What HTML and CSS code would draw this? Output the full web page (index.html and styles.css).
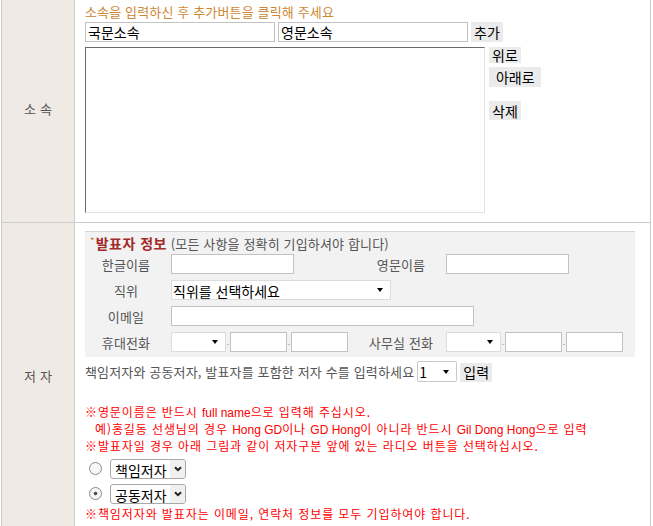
FILE: index.html
```html
<!DOCTYPE html>
<html lang="ko">
<head>
  <meta charset="UTF-8">
  <title>저자 정보 입력</title>
  <meta name="viewport" content="width=device-width, initial-scale=1.0"/>
  <link rel="stylesheet" href="styles.css">
</head>
<body>
  <div class="form">
    <div class="row row-org">
      <div class="head">소 속</div>
      <div class="cell">
        <p class="hint">소속을 입력하신 후 추가버튼을 클릭해 주세요</p>
        <div class="add-line">
          <input type="text" class="txt txt-org" value="국문소속">
          <input type="text" class="txt txt-org" value="영문소속">
          <button class="btn">추가</button>
        </div>
        <div class="list-line">
          <div class="org-list"></div>
          <div class="side">
            <button class="btn btn-up">위로</button>
            <button class="btn btn-down">&nbsp;아래로&nbsp;</button>
            <button class="btn btn-del">삭제</button>
          </div>
        </div>
      </div>
    </div>

    <div class="row row-author">
      <div class="head">저 자</div>
      <div class="cell">
        <div class="info-box">
          <div class="info-title"><span class="star">*</span><b>발표자 정보</b> (모든 사항을 정확히 기입하셔야 합니다)</div>
          <div class="info-grid">
            <label>한글이름</label>
            <input type="text" class="txt w-name">
            <label>영문이름</label>
            <input type="text" class="txt w-name">

            <label>직위</label>
            <span class="sel sel-pos wide"><select><option>직위를 선택하세요</option></select><i class="arrow"></i></span>

            <label>이메일</label>
            <input type="text" class="txt w-mail wide">

            <label>휴대전화</label>
            <span class="phone">
              <span class="sel sel-tel"><select><option></option></select><i class="arrow"></i></span>
              <span class="dash">-</span>
              <input type="text" class="txt w-tel">
              <span class="dash">-</span>
              <input type="text" class="txt w-tel">
            </span>
            <label>사무실 전화</label>
            <span class="phone">
              <span class="sel sel-tel"><select><option></option></select><i class="arrow"></i></span>
              <span class="dash">-</span>
              <input type="text" class="txt w-tel">
              <span class="dash">-</span>
              <input type="text" class="txt w-tel">
            </span>
          </div>
        </div>

        <div class="count-line">
          책임저자와 공동저자, 발표자를 포함한 저자 수를 입력하세요
          <span class="sel sel-count"><select><option>1</option></select><i class="arrow"></i></span>
          <button class="btn">입력</button>
        </div>

        <div class="notes">
          <p>※영문이름은 반드시 <span class="en">full name</span>으로 입력해 주십시오.</p>
          <p class="indent">예)홍길동 선생님의 경우 <span class="en">Hong GD</span>이나 <span class="en">GD Hong</span>이 아니라 반드시 <span class="en">Gil Dong Hong</span>으로 입력</p>
          <p>※발표자일 경우 아래 그림과 같이 저자구분 앞에 있는 라디오 버튼을 선택하십시오.</p>
        </div>

        <div class="authors">
          <div class="author-line">
            <input type="radio" name="presenter" class="radio">
            <span class="old-sel"><select><option>책임저자</option></select><span class="chev"><svg width="8" height="6" viewBox="0 0 8 6"><path d="M1 1.2 L4 4.2 L7 1.2" fill="none" stroke="#222" stroke-width="2"/></svg></span></span>
          </div>
          <div class="author-line">
            <input type="radio" name="presenter" class="radio" checked>
            <span class="old-sel"><select><option>공동저자</option></select><span class="chev"><svg width="8" height="6" viewBox="0 0 8 6"><path d="M1 1.2 L4 4.2 L7 1.2" fill="none" stroke="#222" stroke-width="2"/></svg></span></span>
          </div>
        </div>

        <div class="notes">
          <p>※책임저자와 발표자는 이메일, 연락처 정보를 모두 기입하여야 합니다.</p>
        </div>
      </div>
    </div>
  </div>
</body>
</html>
```

FILE: styles.css
```css
body {
  margin: 0;
  font-family: "Noto Sans CJK KR", sans-serif;
  font-size: 13px;
  letter-spacing: 0.15px;
  color: #555;
  background: #fff;
}
p {
  margin: 0;
}
.form {
  width: 650px;
  margin: -6px 0 0 1px;
  border-left: 1px solid #ccc;
  border-right: 1px solid #ccc;
  box-sizing: border-box;
}
.row {
  display: grid;
  grid-template-columns: 73px 1fr;
}
.row + .row {
  border-top: 1px solid #ccc;
}
.head {
  background: #efebe4;
  border-right: 1px solid #ccc;
  display: flex;
  align-items: center;
  justify-content: center;
  color: #555;
}
.cell {
  padding: 11px 0 9px 10px;
}
.row-author .cell {
  padding: 8px 0 6px 10px;
}

/* 소속 */
.hint {
  color: #cc8833;
  line-height: 14px;
}
.add-line {
  display: flex;
  gap: 3px;
  margin-top: 3px;
}
.txt {
  height: 20px;
  box-sizing: border-box;
  border: 1px solid #c2c2c2;
  background: #fff;
  padding: 0 2px;
  font: 14px "Noto Sans CJK KR", sans-serif;
  letter-spacing: 0;
  color: #000;
  outline: none;
}
.txt-org {
  width: 190px;
}
.btn {
  height: 20px;
  padding: 0 3px;
  border: 0;
  background: #ebebeb;
  font: 14px "Noto Sans CJK KR", sans-serif;
  letter-spacing: 0;
  line-height: 20px;
  color: #000;
}
.list-line {
  display: flex;
  margin-top: 5px;
}
.org-list {
  width: 400px;
  height: 166px;
  box-sizing: border-box;
  border: 1px solid;
  border-color: #6b6b6b #e2e2e2 #e2e2e2 #6b6b6b;
  background: #fff;
}
.side {
  display: flex;
  flex-direction: column;
  align-items: flex-start;
  margin-left: 4px;
}
.btn-up {
  height: 16px;
  line-height: 16px;
}
.btn-down {
  margin-top: 4px;
}
.btn-del {
  margin-top: 14px;
  height: 19px;
}

/* 발표자 정보 */
.info-box {
  width: 550px;
  background: #f2f2f2;
  border-top: 1px solid #d6d6d6;
  padding: 3px 0 2px;
}
.info-title {
  height: 16px;
  line-height: 16px;
  padding-left: 5px;
  color: #555;
}
.star {
  color: #e0701c;
  font-size: 10px;
  vertical-align: top;
  line-height: 12px;
  margin-right: 1px;
  letter-spacing: 0;
}
.info-title b {
  color: #a32a2a;
  font-size: 14px;
  letter-spacing: 0.5px;
}
.info-grid {
  display: grid;
  grid-template-columns: 86px 189px 86px 1fr;
  grid-auto-rows: 26px;
  align-items: center;
  justify-items: start;
}
.info-grid label {
  justify-self: stretch;
  text-align: center;
  padding-right: 4px;
  color: #555;
}
.wide {
  grid-column: 2 / 5;
}
.w-name {
  width: 123px;
}
.w-mail {
  width: 303px;
}
.w-tel {
  width: 57px;
}
.phone {
  display: inline-flex;
  align-items: center;
}
.dash {
  width: 4px;
  font-size: 8px;
  line-height: 8px;
  letter-spacing: 0;
  color: #999;
  text-align: center;
  padding-top: 5px;
  overflow: hidden;
}

/* select */
.sel {
  display: inline-flex;
  align-items: center;
  height: 20px;
  box-sizing: border-box;
  border: 1px solid #dcdcdc;
  background: #fff;
}
.sel select {
  appearance: none;
  border: 0;
  background: transparent;
  flex: 1;
  min-width: 0;
  height: 100%;
  padding: 0 0 0 1px;
  font: 14px "Noto Sans CJK KR", sans-serif;
  letter-spacing: 0;
  color: #000;
  outline: none;
}
.arrow {
  width: 0;
  height: 0;
  border-left: 3px solid transparent;
  border-right: 3px solid transparent;
  border-top: 4px solid #000;
  margin-right: 7px;
}
.sel-pos {
  width: 220px;
}
.sel-tel {
  width: 55px;
}
.sel-count {
  width: 40px;
  height: 21px;
  border-color: #c8c8c8;
  border-radius: 2px;
  margin-left: 3px;
}
.count-line {
  margin-top: 4px;
  height: 21px;
  line-height: 21px;
  display: flex;
  align-items: center;
  color: #555;
}
.count-line .btn {
  margin-left: 3px;
  height: 19px;
  line-height: 19px;
  align-self: flex-end;
}

/* 안내 */
.notes {
  color: #f00;
  font-size: 12px;
  letter-spacing: 0.9px;
  line-height: 15px;
}
.notes .en {
  font-family: "Liberation Sans", sans-serif;
  letter-spacing: 0;
}
.count-line + .notes {
  margin-top: 22px;
}
.indent {
  padding-left: 10px;
}
.authors {
  margin-top: 3px;
}
.author-line {
  height: 25px;
  display: flex;
  align-items: center;
}
.radio {
  appearance: none;
  width: 13px;
  height: 13px;
  margin: 0 8px 0 4px;
  border: 1px solid #8a8a8a;
  border-radius: 50%;
  background: #f7f7f7;
  box-sizing: border-box;
}
.radio:checked {
  background: radial-gradient(circle, #555 0 1.6px, #f7f7f7 2.2px);
}
.old-sel {
  display: inline-flex;
  width: 76px;
  height: 20px;
  box-sizing: border-box;
  border: 1px solid #a8a8a8;
  border-radius: 3px;
  background: #fff;
  overflow: hidden;
}
.old-sel select {
  appearance: none;
  border: 0;
  background: transparent;
  flex: 1;
  min-width: 0;
  padding: 0 0 0 4px;
  font: 14px "Noto Sans CJK KR", sans-serif;
  letter-spacing: 0;
  color: #000;
  outline: none;
}
.chev {
  width: 15px;
  display: flex;
  align-items: center;
  justify-content: center;
  background: #f0f0f0;
}
```
